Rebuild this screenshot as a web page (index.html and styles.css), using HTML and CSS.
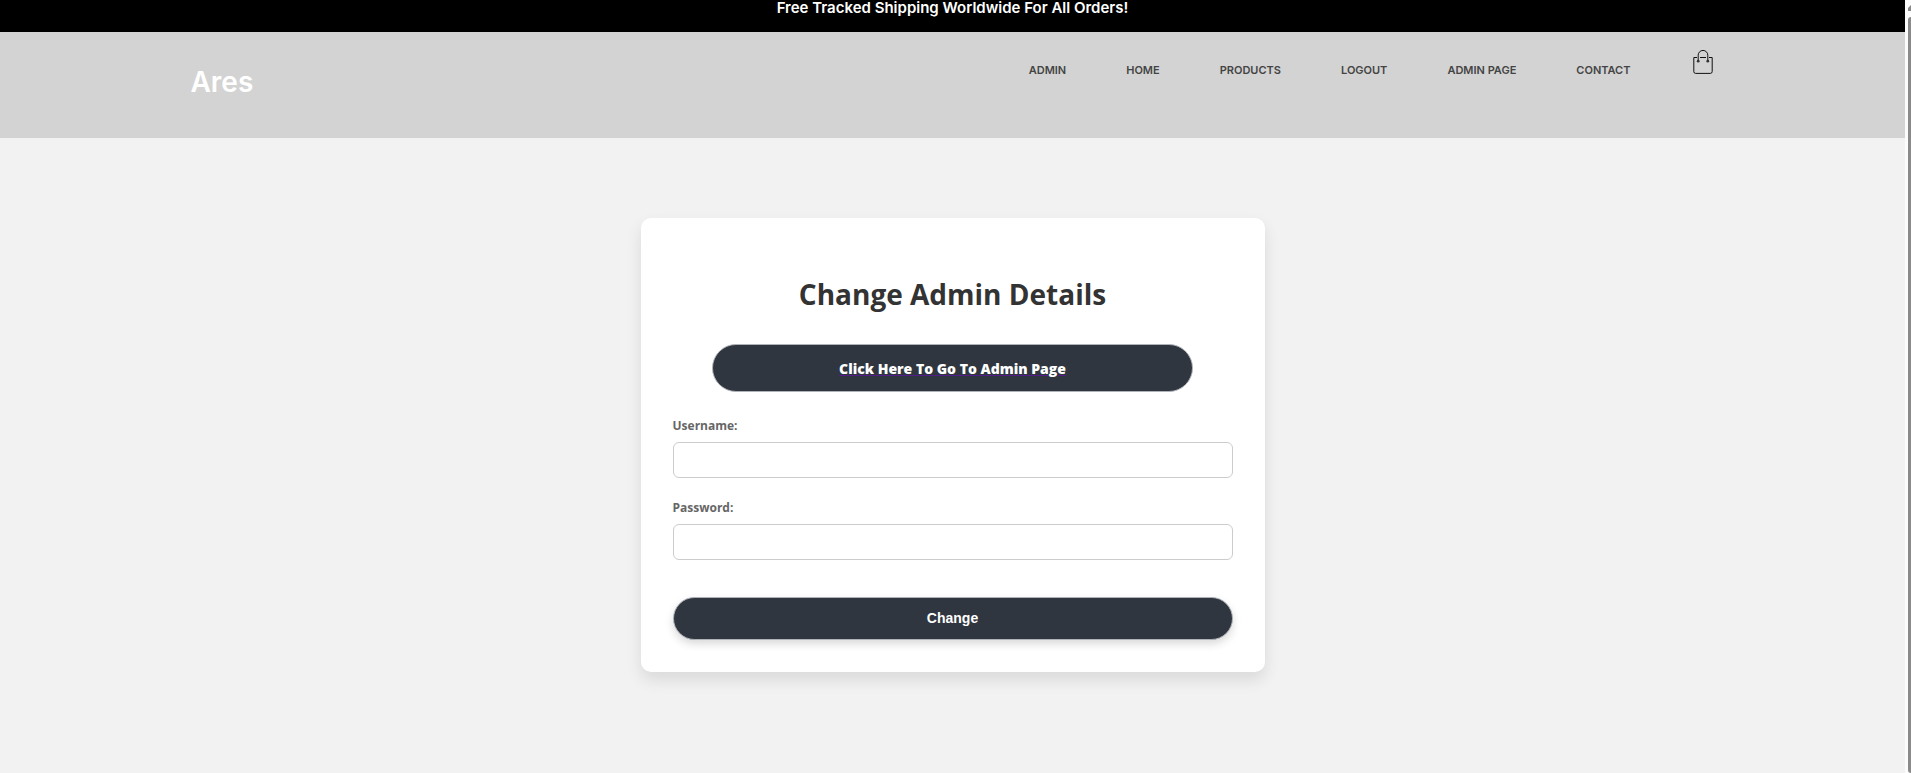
FILE: index.html
```html
<!DOCTYPE html>
<html lang="en">
<head>
<meta charset="utf-8">
<meta name="viewport" content="width=device-width, initial-scale=1">
<title>Ares</title>
<link rel="stylesheet" href="styles.css">
</head>
<body>
<div class="page">
  <p class="promo">Free Tracked Shipping Worldwide For All Orders!</p>
  <header class="header">
    <a class="brand" href="#">Ares</a>
    <nav class="nav">
      <a href="#">ADMIN</a>
      <a href="#">HOME</a>
      <a href="#">PRODUCTS</a>
      <a href="#">LOGOUT</a>
      <a href="#">ADMIN PAGE</a>
      <a href="#">CONTACT</a>
      <a class="cart" href="#" aria-label="Cart">
        <svg width="20" height="24" viewBox="0 0 20 24" fill="none" stroke="#111">
          <path d="M4 7.5H.8V21.5Q.8 23.4 2.7 23.4H17.3Q19.2 23.4 19.2 21.5V7.5H16M7 7.5H13"/>
          <path d="M5.2 11V5.2a4.8 4.8 0 0 1 9.6 0V11"/>
          <circle cx="5.2" cy="11.2" r="1.4" fill="#333" stroke="none"/>
          <circle cx="14.8" cy="11.2" r="1.4" fill="#333" stroke="none"/>
        </svg>
      </a>
    </nav>
  </header>
  <main class="main">
    <form class="card">
      <h1 class="title">Change Admin Details</h1>
      <a class="pill pill-link" href="#">Click Here To Go To Admin Page</a>
      <label class="label" for="username">Username:</label>
      <input class="field" id="username" type="text">
      <label class="label" for="password">Password:</label>
      <input class="field" id="password" type="password">
      <button class="pill pill-submit" type="button">Change</button>
    </form>
  </main>
</div>
<div class="scrollbar" aria-hidden="true">
  <svg class="arrow" width="3" height="6" viewBox="0 0 3 6"><path d="M3 0V6H0V3Z" fill="#888"/></svg>
  <div class="thumb"></div>
</div>
</body>
</html>
```
FILE: styles.css
```css
* { box-sizing: border-box; }

body {
  margin: 0;
  height: 100vh;
  display: grid;
  grid-template-columns: 1fr 6px;
  background: #f2f2f2;
  font-family: "Open Sans", "Noto Sans", sans-serif;
}

.page { min-width: 0; }

.promo {
  margin: 0;
  padding-bottom: 16px;
  background: #000;
  color: #fff;
  font: 600 15px/16px Inter, sans-serif;
  text-align: center;
}

.header {
  display: flex;
  justify-content: space-between;
  align-items: flex-start;
  padding: 16px 10% 22px;
  background: #d3d3d3;
  font-family: Inter, sans-serif;
}

.brand {
  padding: 16px 0;
  color: #fff;
  font-size: 28px;
  font-weight: 600;
  line-height: 36px;
  text-decoration: none;
}

.nav {
  display: flex;
  gap: 60px;
  padding-top: 2px;
}

.nav a {
  padding-top: 12px;
  color: #444;
  font-size: 11px;
  font-weight: 600;
  line-height: 16px;
  text-decoration: none;
}

.nav .cart {
  padding: 0 2px;
}

.cart svg { display: block; }

.main { padding: 80px 16px; }

.card {
  display: flex;
  flex-direction: column;
  max-width: 624px;
  margin: 0 auto;
  padding: 56px 32px 32px;
  border-radius: 10px;
  background: #fff;
  box-shadow: 0 8px 16px rgba(0, 0, 0, 0.1);
}

.title {
  margin: 0 0 30px;
  color: #333;
  font-size: 28px;
  font-weight: 700;
  line-height: 40px;
  text-align: center;
}

.pill {
  border: 1px solid #b0b3b8;
  border-radius: 24px;
  background: #2f3640;
  color: #fff;
  font-weight: 700;
  text-align: center;
}

.pill-link {
  align-self: center;
  width: 86%;
  margin-bottom: 24px;
  padding-top: 2px;
  font-size: 14px;
  font-weight: 800;
  line-height: 44px;
  text-decoration: underline #551a8b 1px;
  text-underline-offset: 1px;
}

.label {
  margin-bottom: 6px;
  color: #666;
  font-size: 12px;
  font-weight: 700;
  line-height: 20px;
}

.field {
  width: 100%;
  height: 36px;
  margin-bottom: 20px;
  padding: 8px;
  border: 1px solid #ccc;
  border-radius: 6px;
  background: #fff;
  font-size: 14px;
}

.pill-submit {
  margin-top: 17px;
  padding: 12px;
  font-family: "Liberation Sans", Arial, sans-serif;
  font-size: 14px;
  line-height: 17px;
  box-shadow: 0 4px 8px rgba(0, 0, 0, 0.15);
}

.scrollbar {
  display: flex;
  flex-direction: column;
  align-items: flex-end;
  gap: 6px;
  padding-top: 5px;
  background: #fcfcfc;
}

.arrow { display: block; }

.thumb {
  flex: 1;
  width: 3px;
  border-radius: 3px 0 0 3px;
  background: #8a8a8a;
}
```
